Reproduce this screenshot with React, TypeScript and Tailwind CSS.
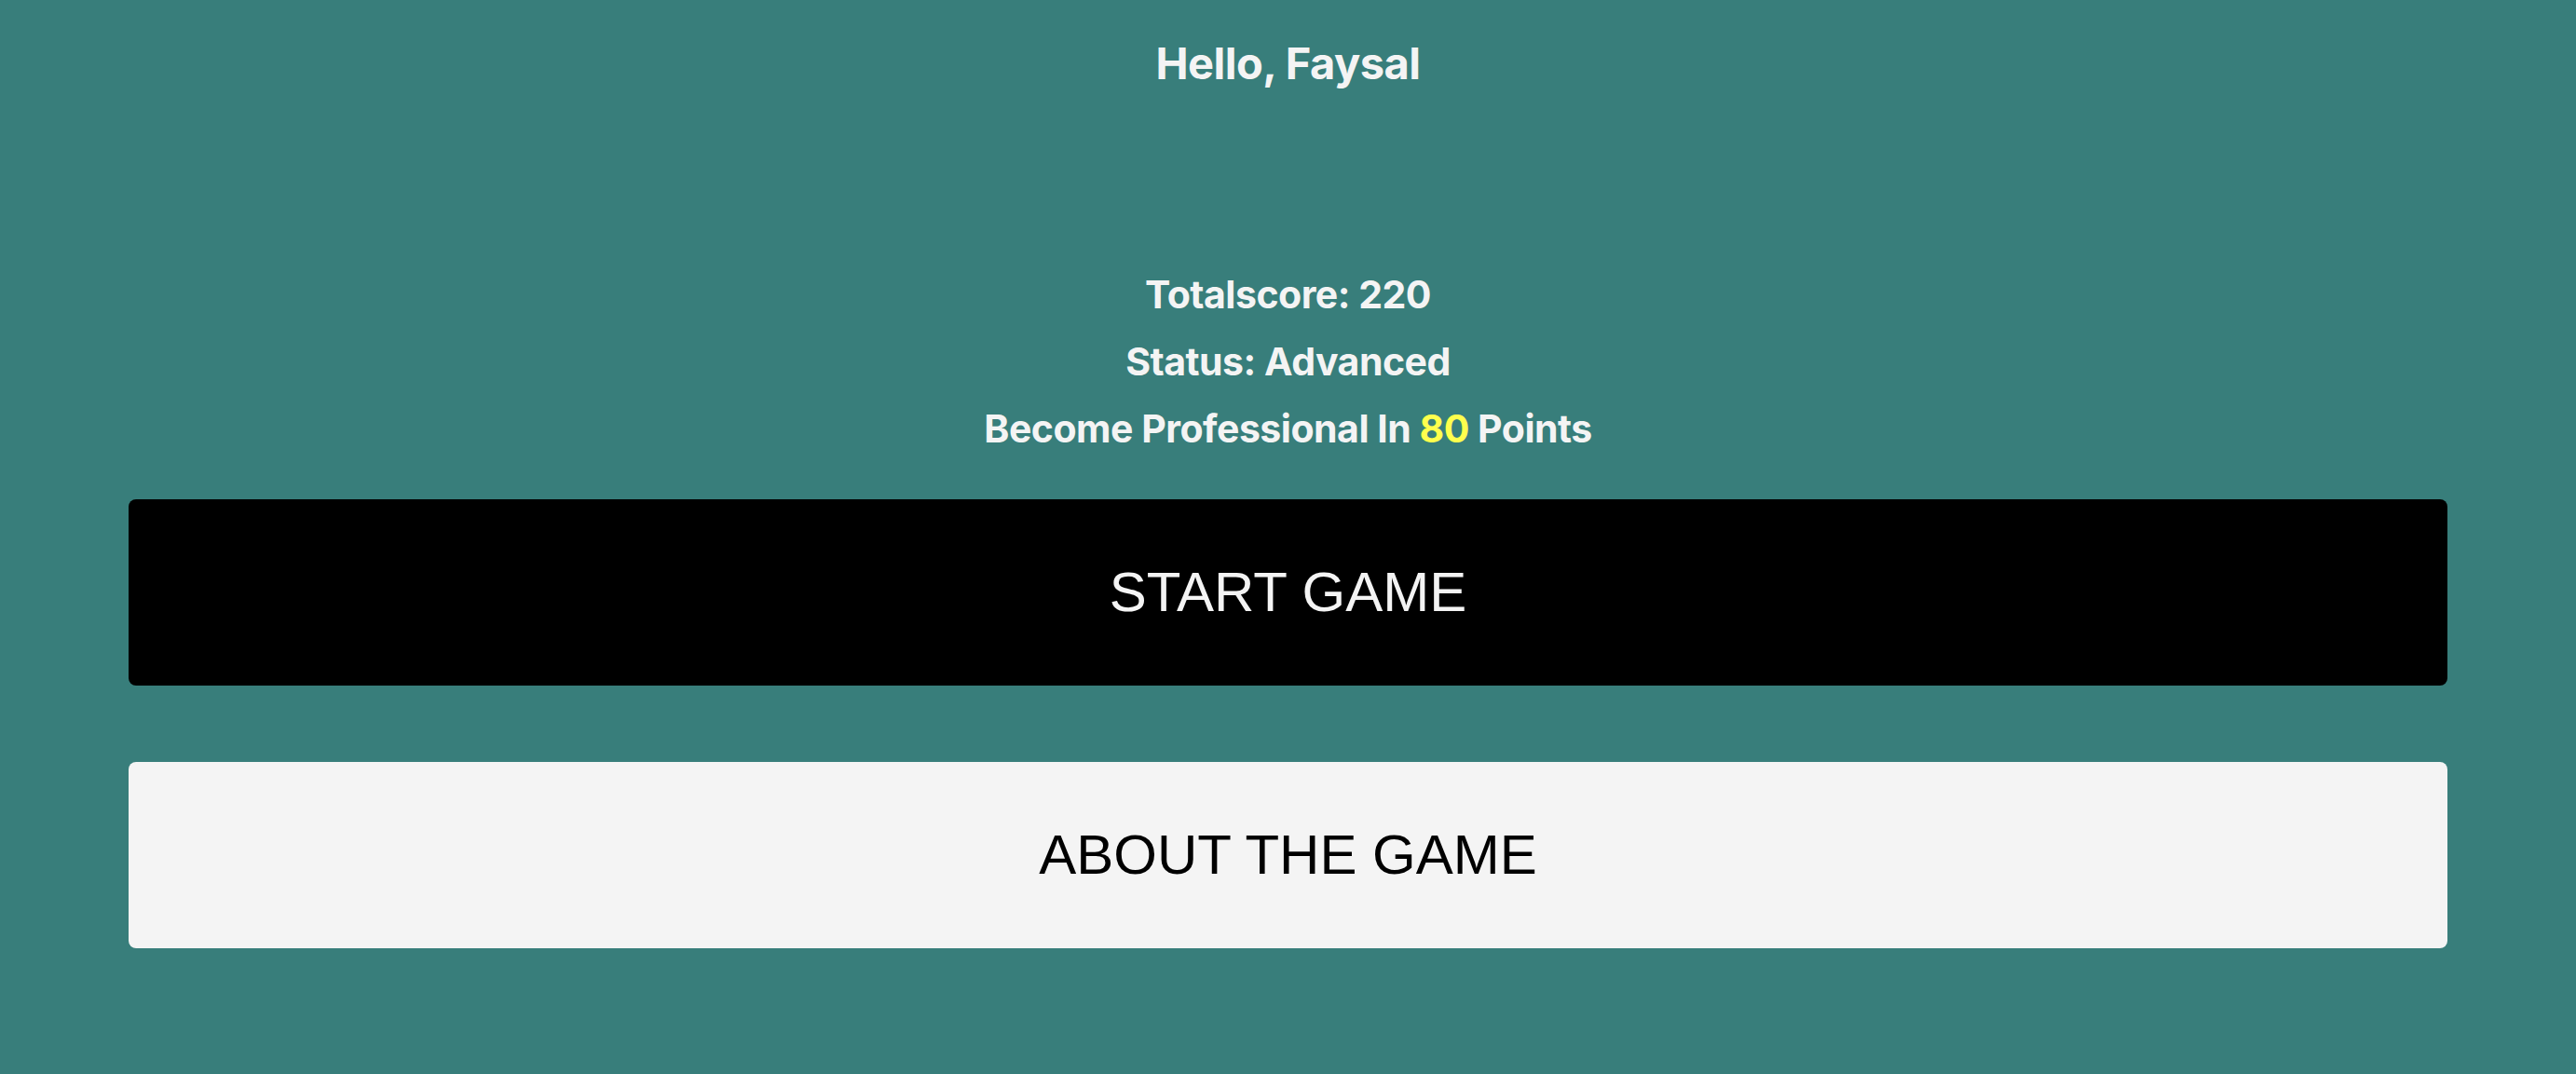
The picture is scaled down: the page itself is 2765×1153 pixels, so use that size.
import React from "react";

export default function App() {
  return (
    <div className="min-h-[1153px] w-full bg-[#387e7b] flex flex-col items-center">
      <h1 className="mt-[38px] text-[47px] leading-[60px] font-bold text-[#f4f4f4] tracking-[-0.5px] font-['Inter','Noto_Sans',sans-serif]">
        Hello, Faysal
      </h1>
      <div className="mt-[194px] flex flex-col items-center gap-[24px] text-[41px] leading-[48px] font-bold text-[#f4f4f4] tracking-[-0.5px] font-['Inter','Noto_Sans',sans-serif]">
        <p>Totalscore: 220</p>
        <p>Status: Advanced</p>
        <p>
          Become Professional In <span className="text-[#ffff4d]">80</span> Points
        </p>
      </div>
      <button className="mt-[52px] w-[90%] h-[200px] rounded-[8px] bg-black text-[#f4f4f4] text-[60px] font-['Liberation_Sans',Arial,sans-serif]">
        START GAME
      </button>
      <button className="mt-[82px] w-[90%] h-[200px] rounded-[8px] bg-[#f4f4f4] text-black text-[60px] font-['Liberation_Sans',Arial,sans-serif]">
        ABOUT THE GAME
      </button>
    </div>
  );
}
